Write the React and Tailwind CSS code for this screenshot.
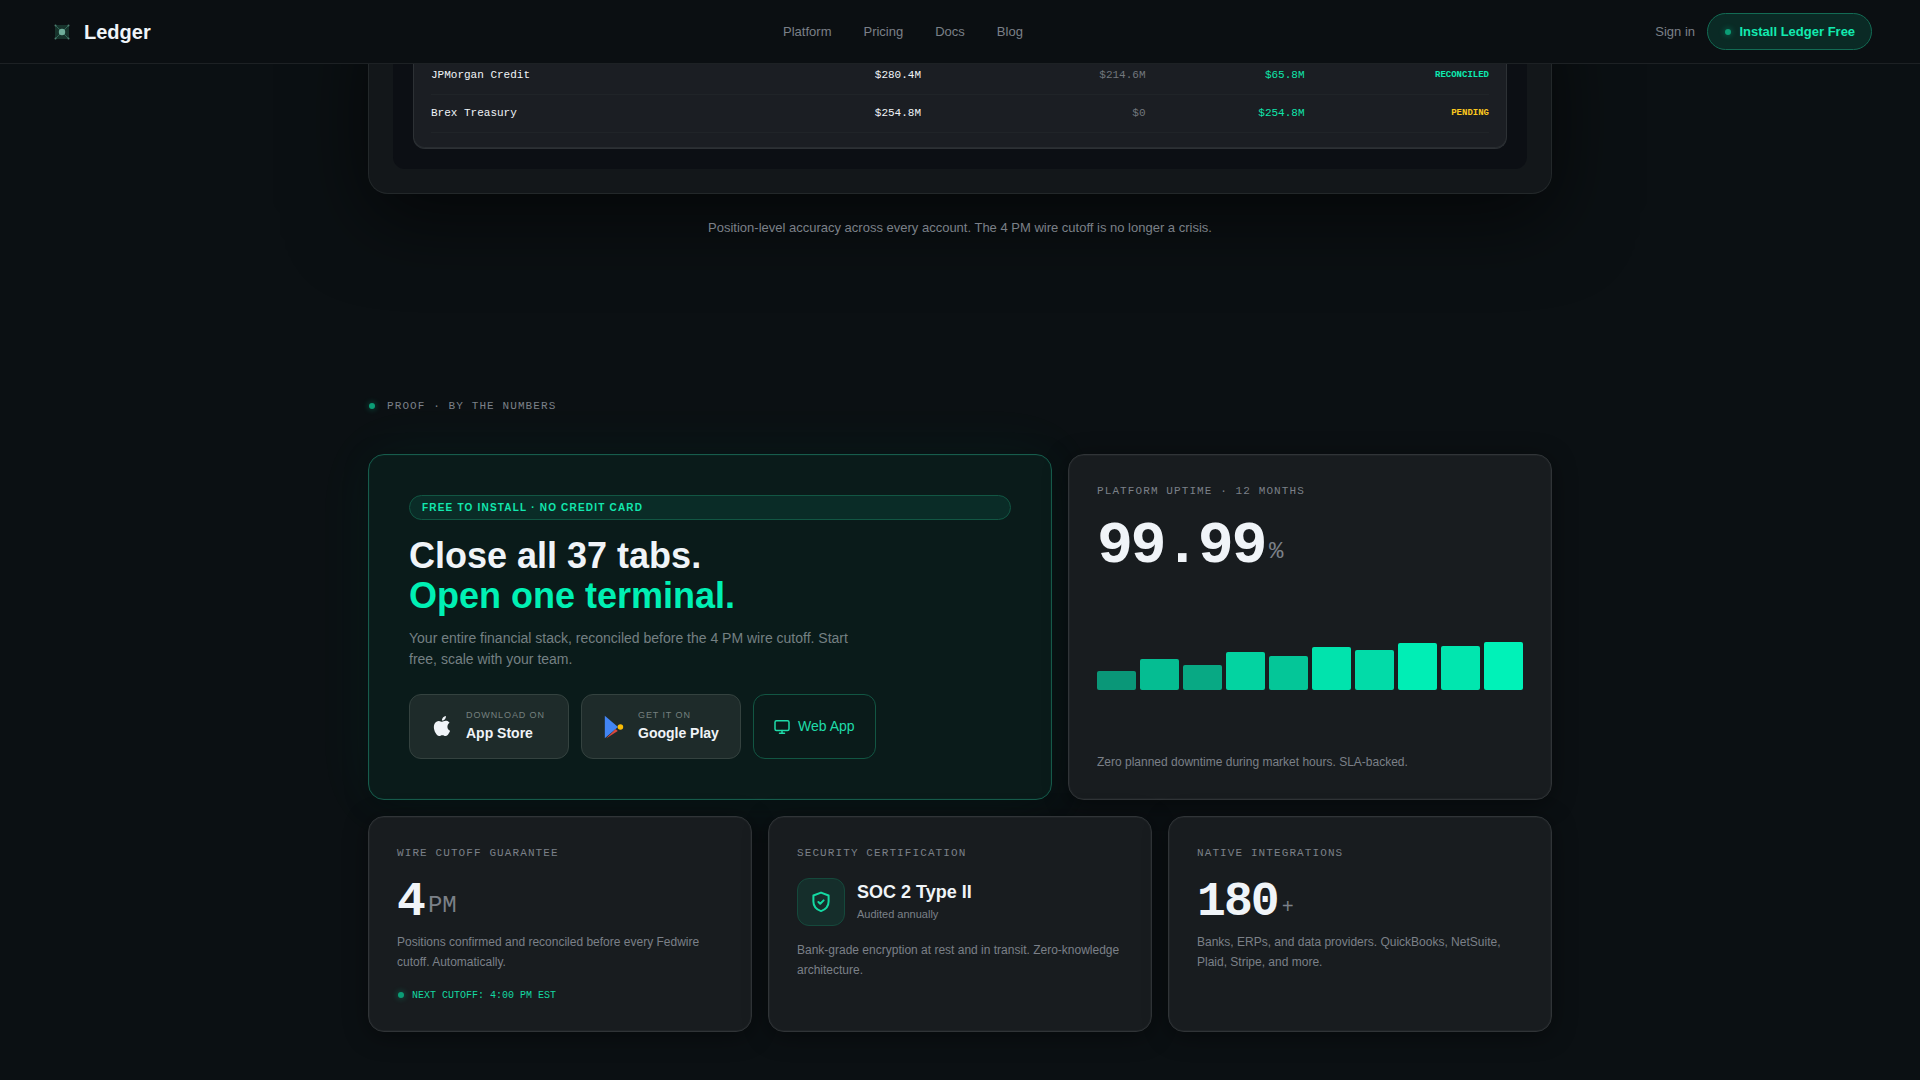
const NAV_LINKS = ['Platform', 'Pricing', 'Docs', 'Blog'];

const ROWS = [
  { name: 'JPMorgan Credit', balance: '$280.4M', debt: '$214.6M', net: '$65.8M', status: 'RECONCILED' },
  { name: 'Brex Treasury', balance: '$254.8M', debt: '$0', net: '$254.8M', status: 'PENDING' },
];

const UPTIME = [40, 65, 52, 79, 71, 90, 85, 98, 92, 100];

const CARD =
  'rounded-2xl border border-[#303437] bg-[#181c1f] shadow-[0_4px_24px_rgba(0,0,0,0.4),inset_0_0_0_1px_rgba(255,255,255,0.03)]';

function Dot({ className = '' }) {
  return (
    <span
      className={`size-1.5 shrink-0 rounded-full bg-[#0b9d76] shadow-[0_0_6px_rgba(0,240,180,0.4)] ${className}`}
    />
  );
}

function Label({ children }) {
  return (
    <p className="font-['Liberation_Mono',monospace] text-[11px] leading-[17.6px] tracking-[1.1px] text-[#7b8088] uppercase">
      {children}
    </p>
  );
}

function LogoMark() {
  return (
    <svg width="16" height="16" viewBox="0 0 16 16" fill="none">
      <rect x="1" y="1" width="14" height="14" fill="#17332c" />
      <path d="M1.5 1.5l13 13M14.5 1.5l-13 13" stroke="#2f6354" strokeWidth="1" />
      <circle cx="8" cy="8" r="3.2" fill="#6fae9b" />
      <circle cx="1.5" cy="1.5" r="1" fill="#4f7f71" />
      <circle cx="14.5" cy="1.5" r="1" fill="#4f7f71" />
      <circle cx="1.5" cy="14.5" r="1" fill="#4f7f71" />
      <circle cx="14.5" cy="14.5" r="1" fill="#4f7f71" />
    </svg>
  );
}

function AppleIcon() {
  return (
    <svg className="mb-0.5" width="24" height="24" viewBox="0 0 24 24" fill="#f0f4f8">
      <path d="M18.71 19.5c-.83 1.24-1.71 2.45-3.05 2.47-1.34.03-1.77-.79-3.29-.79-1.53 0-2 .77-3.27.82-1.31.05-2.3-1.32-3.14-2.53C4.25 17 2.94 12.45 4.7 9.39c.87-1.52 2.43-2.48 4.12-2.51 1.28-.02 2.5.87 3.29.87.78 0 2.26-1.07 3.81-.91.65.03 2.47.26 3.64 1.98-.09.06-2.17 1.28-2.15 3.81.03 3.02 2.65 4.03 2.68 4.04-.03.07-.42 1.44-1.38 2.83M13 3.5c.73-.83 1.94-1.46 2.94-1.5.13 1.17-.34 2.35-1.04 3.19-.69.85-1.83 1.51-2.95 1.42-.15-1.15.41-2.35 1.05-3.11z" />
    </svg>
  );
}

function PlayIcon() {
  return (
    <svg width="24" height="24" viewBox="0 0 24 24" fill="none">
      <path d="M2.8.8L16 12 2.8 23.2z" fill="#4285f4" />
      <path d="M4 23.6L15.8 16l-2.2-2z" fill="#d9483f" />
      <circle cx="18.4" cy="12" r="2.8" fill="#fbbc04" />
    </svg>
  );
}

function StoreButton({ icon, caption, title }) {
  return (
    <a className="flex h-[65px] w-40 items-center gap-3 rounded-xl border border-[#34423f] bg-[#1e2b2a] px-5">
      <span className="flex w-6 shrink-0 justify-center">{icon}</span>
      <span className="flex flex-col pb-0.5 whitespace-nowrap">
        <span className="text-[9px] leading-[14.4px] tracking-[0.9px] text-[#75807f] uppercase">{caption}</span>
        <span className="text-[14px] leading-[20px] font-semibold text-[#f0f4f8]">{title}</span>
      </span>
    </a>
  );
}

function Nav() {
  return (
    <header className="absolute inset-x-0 top-0 z-10 flex h-16 items-center justify-between border-b border-[#1d2124] bg-[#0b0f12] px-12">
      <div className="flex items-center gap-3">
        <span className="flex w-7 justify-center">
          <LogoMark />
        </span>
        <span className="-ml-1 text-[20px] font-bold text-[#f0f4f8]">Ledger</span>
      </div>
      <nav className="flex gap-8 text-[13px] text-[#7b8088]">
        {NAV_LINKS.map((link) => (
          <a key={link}>{link}</a>
        ))}
      </nav>
      <div className="flex items-center justify-end gap-3">
        <a className="text-[13px] text-[#7b8088]">Sign in</a>
        <a className="flex h-[37px] w-[165px] items-center gap-[9px] rounded-full border border-[#136b54] bg-[#0a2a25] pl-[16.5px] text-[13px] font-semibold whitespace-nowrap text-[#12eab0]">
          <Dot />
          Install Ledger Free
        </a>
      </div>
    </header>
  );
}

function PositionsPanel() {
  return (
    <div className="h-[194px] rounded-b-[20px] border border-t-0 border-[#23282a] bg-[#13171a] px-6 pb-6 shadow-[0_24px_80px_rgba(0,0,0,0.6)]">
      <div className="h-[169px] rounded-b-xl bg-[#0c0f14] px-5 pb-5">
        <div className="h-[149px] rounded-b-xl border border-t-0 border-[#2d3135] bg-[#1b1e23] px-[17px] pt-[57px] shadow-[inset_0_-1px_0_#282c30]">
          {ROWS.map((row) => (
            <div
              key={row.name}
              className="grid h-[38px] grid-cols-[319px_171px_224.5px_159px_184.5px] items-center border-b border-[#202428] text-right font-['Liberation_Mono',monospace] text-[11px] text-[#f0f4f8]"
            >
              <span className="text-left">{row.name}</span>
              <span>{row.balance}</span>
              <span className="text-[#72777d]">{row.debt}</span>
              <span className="text-[#10e5ab]">{row.net}</span>
              <span
                className={`text-[9px] font-bold ${row.status === 'PENDING' ? 'text-[#fcc81e]' : 'text-[#0cebb0]'}`}
              >
                {row.status}
              </span>
            </div>
          ))}
        </div>
      </div>
    </div>
  );
}

function InstallCard() {
  return (
    <div className="col-span-7 flex flex-col rounded-2xl border border-[#175c4c] bg-[#0a1b1a] p-10 shadow-[0_0_60px_rgba(0,240,180,0.06),0_4px_24px_rgba(0,0,0,0.3),inset_0_0_0_1px_rgba(0,240,180,0.04)]">
      <span className="flex h-[25px] items-center rounded-full border border-[#125643] bg-[#0a2c27] px-3 text-[10px] font-bold tracking-[1.2px] text-[#12e8af] uppercase">
        Free to install · No credit card
      </span>
      <h2 className="mt-4 text-[36px] leading-[40px] font-bold text-[#f0f4f8]">
        Close all 37 tabs.
        <br />
        <span className="text-[#00f0b4]">Open one terminal.</span>
      </h2>
      <p className="mt-3 w-[460px] text-[14px] leading-[21px] text-[#758083]">
        Your entire financial stack, reconciled before the 4 PM wire cutoff. Start free, scale with your team.
      </p>
      <div className="mt-auto flex gap-3">
        <StoreButton icon={<AppleIcon />} caption="Download on" title="App Store" />
        <StoreButton icon={<PlayIcon />} caption="Get it on" title="Google Play" />
        <a className="flex h-[65px] w-[123px] items-center gap-2 rounded-xl border border-[#125643] px-5 text-[14px] whitespace-nowrap text-[#1fdca9]">
          <svg
            width="16"
            height="16"
            viewBox="0 0 16 16"
            fill="none"
            stroke="currentColor"
            strokeWidth="1.5"
            strokeLinecap="round"
          >
            <rect x="1" y="1.8" width="14" height="9.7" rx="1.5" />
            <path d="M5.5 14.2h5M8 11.5v2.7" />
          </svg>
          Web App
        </a>
      </div>
    </div>
  );
}

function UptimeCard() {
  return (
    <div className={`col-span-5 flex flex-col justify-between p-7 ${CARD}`}>
      <div className="pb-[3px]">
        <Label>Platform uptime · 12 months</Label>
        <p className="mt-[15px] flex h-[60px] items-end font-['Liberation_Mono',monospace] text-[60px] leading-[60px] font-bold tracking-[-2.4px] text-[#f0f4f8]">
          99.99
          <span className="mb-3 ml-1 text-[24px] leading-6 font-normal tracking-normal text-[#7b8088]">%</span>
        </p>
      </div>
      <div className="flex h-12 items-end gap-1">
        {UPTIME.map((value, i) => (
          <div
            key={i}
            className="flex-1 rounded-[2px] bg-[#00f2b8]"
            style={{ height: `${value}%`, opacity: 0.3 + (value / 100) * 0.7 }}
          />
        ))}
      </div>
      <p className="pb-px text-[12px] leading-4 text-[#7b8088]">
        Zero planned downtime during market hours. SLA-backed.
      </p>
    </div>
  );
}

function CutoffCard() {
  return (
    <div className={`p-7 ${CARD}`}>
      <Label>Wire cutoff guarantee</Label>
      <p className="mt-[15px] flex h-12 items-end font-['Liberation_Mono',monospace] text-[48px] leading-[48px] font-bold tracking-[-1.92px] text-[#f0f4f8]">
        4<span className="mb-2 ml-1 text-[24px] leading-6 font-normal tracking-normal text-[#7b8088]">PM</span>
      </p>
      <p className="mt-1.5 text-[12px] leading-[20px] text-[#7b8088]">
        Positions confirmed and reconciled before every Fedwire cutoff. Automatically.
      </p>
      <p className="mt-4 flex items-center gap-2 pl-px font-['Liberation_Mono',monospace] text-[10px] leading-[15px] text-[#14d9a2]">
        <Dot />
        NEXT CUTOFF: 4:00 PM EST
      </p>
    </div>
  );
}

function SecurityCard() {
  return (
    <div className={`p-7 ${CARD}`}>
      <Label>Security certification</Label>
      <div className="mt-[15px] flex items-center gap-3">
        <span className="flex size-12 items-center justify-center rounded-xl border border-[#15493c] bg-[#152e2b]">
          <svg
            width="24"
            height="24"
            viewBox="0 0 24 24"
            fill="none"
            stroke="#14d9a2"
            strokeWidth="2"
            strokeLinecap="round"
            strokeLinejoin="round"
          >
            <path d="M12 2.6L4.4 5.5v6c0 4.6 3 8 7.6 9.6 4.6-1.6 7.6-5 7.6-9.6v-6z" />
            <path d="M9.4 12l1.8 1.8 3.4-3.4" />
          </svg>
        </span>
        <div className="pb-0.5">
          <p className="text-[18px] leading-[28px] font-bold text-[#f0f4f8]">SOC 2 Type II</p>
          <p className="text-[11px] leading-[17.6px] text-[#7b8088]">Audited annually</p>
        </div>
      </div>
      <p className="mt-3.5 text-[12px] leading-[20px] text-[#7b8088]">
        Bank-grade encryption at rest and in transit. Zero-knowledge architecture.
      </p>
    </div>
  );
}

function IntegrationsCard() {
  return (
    <div className={`p-7 ${CARD}`}>
      <Label>Native integrations</Label>
      <p className="mt-[15px] flex h-12 items-end font-['Liberation_Mono',monospace] text-[48px] leading-[48px] font-bold tracking-[-1.92px] text-[#f0f4f8]">
        180<span className="mb-2 ml-1 text-[20px] leading-5 font-normal tracking-normal text-[#7b8088]">+</span>
      </p>
      <p className="mt-1.5 text-[12px] leading-[20px] text-[#7b8088]">
        Banks, ERPs, and data providers. QuickBooks, NetSuite, Plaid, Stripe, and more.
      </p>
    </div>
  );
}

export default function App() {
  return (
    <div className="relative h-[1080px] w-[1920px] overflow-hidden bg-[#0b1013] font-['Liberation_Sans',Arial,sans-serif]">
      <Nav />
      <main className="mx-auto w-[1184px]">
        <PositionsPanel />
        <p className="mt-6 text-center text-[13px] leading-5 text-[#7b8088]">
          Position-level accuracy across every account. The 4 PM wire cutoff is no longer a crisis.
        </p>
        <div className="mt-[158px] flex h-5 items-center gap-3">
          <Dot className="ml-[0.5px]" />
          <div className="pt-0.5 pl-[0.5px]">
            <Label>Proof · By the numbers</Label>
          </div>
        </div>
        <section className="mt-[38px] grid h-[346px] grid-cols-12 gap-4">
          <InstallCard />
          <UptimeCard />
        </section>
        <section className="mt-4 grid h-[216px] grid-cols-3 gap-4">
          <CutoffCard />
          <SecurityCard />
          <IntegrationsCard />
        </section>
      </main>
    </div>
  );
}
